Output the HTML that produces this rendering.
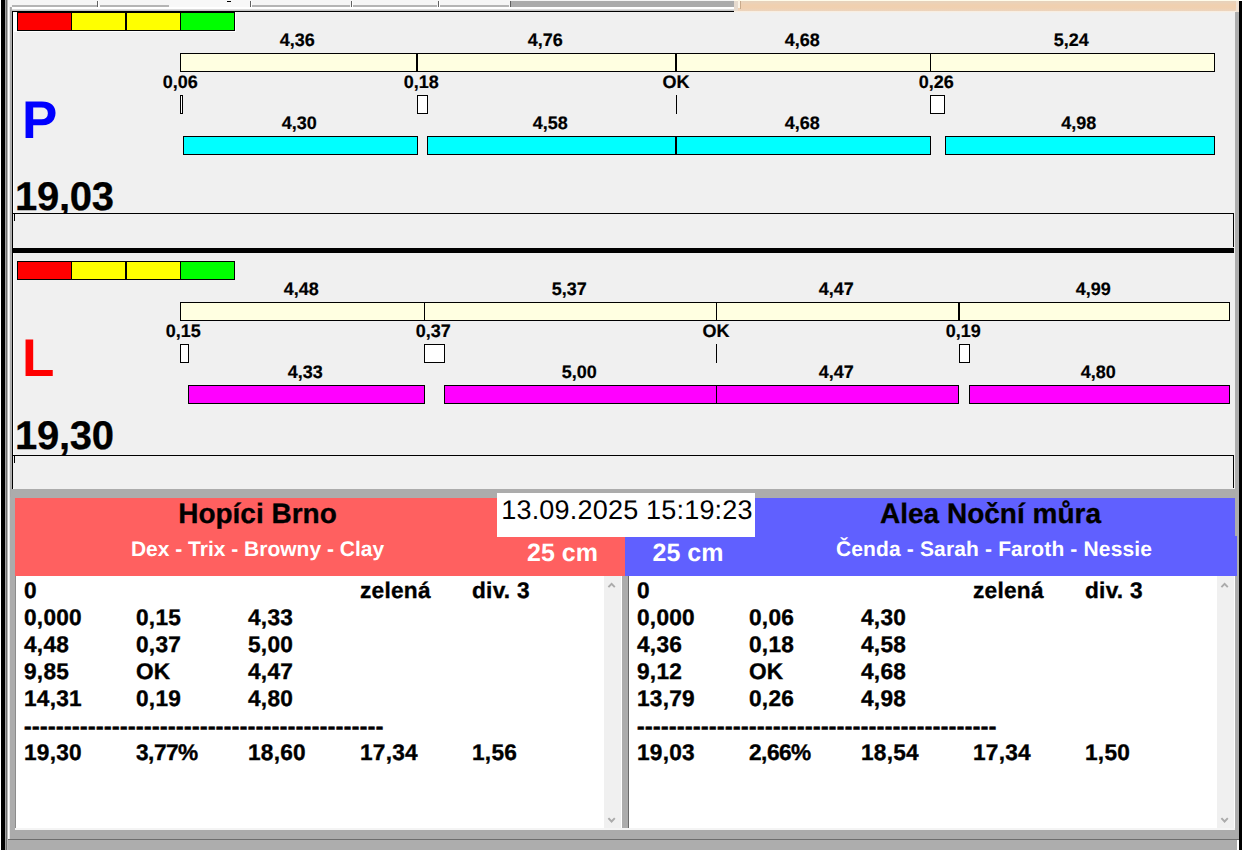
<!DOCTYPE html>
<html lang="cs"><head><meta charset="utf-8"><title>Flyball</title>
<style>
html,body{margin:0;padding:0;}
body{width:1242px;height:850px;position:relative;overflow:hidden;background:#f0f0f0;font-family:"Liberation Sans",sans-serif;font-weight:bold;color:#000;text-rendering:geometricPrecision;}
div{position:absolute;box-sizing:border-box;}
.t{white-space:pre;}
</style></head><body>
<div style="left:0px;top:0px;width:1242px;height:11px;background:#f5f5f5;"></div>
<div style="left:12px;top:5px;width:85px;height:2px;background:#b4b4b4;"></div>
<div style="left:100px;top:5px;width:69px;height:2px;background:#b4b4b4;"></div>
<div style="left:251px;top:5px;width:99px;height:2px;background:#b4b4b4;"></div>
<div style="left:352px;top:5px;width:85px;height:2px;background:#b4b4b4;"></div>
<div style="left:439px;top:5px;width:70px;height:2px;background:#b4b4b4;"></div>
<div style="left:97px;top:1px;width:1px;height:6px;background:#606060;"></div>
<div style="left:98px;top:1px;width:1px;height:6px;background:#fff;"></div>
<div style="left:250px;top:1px;width:1px;height:6px;background:#606060;"></div>
<div style="left:251px;top:1px;width:1px;height:6px;background:#fff;"></div>
<div style="left:351px;top:1px;width:1px;height:6px;background:#606060;"></div>
<div style="left:352px;top:1px;width:1px;height:6px;background:#fff;"></div>
<div style="left:438px;top:1px;width:1px;height:6px;background:#606060;"></div>
<div style="left:439px;top:1px;width:1px;height:6px;background:#fff;"></div>
<div style="left:510px;top:1px;width:1px;height:6px;background:#606060;"></div>
<div style="left:511px;top:1px;width:1px;height:6px;background:#fff;"></div>
<div style="left:170px;top:0px;width:80px;height:9px;background:#f8f8f8;"></div>
<div style="left:227px;top:1px;width:4px;height:1px;background:#000;"></div>
<div style="left:511px;top:1px;width:223px;height:6px;background:#ababab;"></div>
<div style="left:8px;top:7px;width:727px;height:2px;background:#ffffff;"></div>
<div style="left:10px;top:9px;width:725px;height:1px;background:#dadada;"></div>
<div style="left:10px;top:10px;width:725px;height:1px;background:#c2c2c2;"></div>
<div style="left:734px;top:0px;width:505px;height:13px;background:linear-gradient(to bottom,#fffbea 0,#fffbea 1px,#e6d2bc 1px,#ecd2b8 3px,#f0d0b0 5px,#f0d0b0 8px,#ecd4be 11px,#f8eee2 11px,#f8eee2 12px,#f3f0ec 12px,#f3f0ec 13px);"></div>
<div style="left:734px;top:1px;width:4px;height:10px;background:#e6dace;"></div>
<div style="left:738px;top:0px;width:2px;height:8px;background:#fbf3e6;"></div>
<div style="left:740px;top:1px;width:1px;height:8px;background:#c8aa8c;"></div>
<div style="left:1236px;top:1px;width:3px;height:11px;background:#f0e2d4;"></div>
<div style="left:0px;top:0px;width:1px;height:850px;background:#fff;"></div>
<div style="left:1px;top:0px;width:1px;height:850px;background:#000;"></div>
<div style="left:2px;top:0px;width:1px;height:850px;background:#000;"></div>
<div style="left:3px;top:0px;width:1px;height:850px;background:#000;"></div>
<div style="left:4px;top:0px;width:1px;height:850px;background:#000;"></div>
<div style="left:5px;top:0px;width:1px;height:850px;background:#a0a0a0;"></div>
<div style="left:6px;top:0px;width:1px;height:850px;background:#707070;"></div>
<div style="left:7px;top:0px;width:1px;height:850px;background:#b8b8b8;"></div>
<div style="left:8px;top:7px;width:1px;height:843px;background:#fff;"></div>
<div style="left:9px;top:7px;width:1px;height:843px;background:#e8e8e8;"></div>
<div style="left:10px;top:7px;width:1px;height:843px;background:#a8a8a8;"></div>
<div style="left:11px;top:7px;width:1px;height:843px;background:#b0b0b0;"></div>
<div style="left:1235px;top:12px;width:4px;height:838px;background:#adadad;"></div>
<div style="left:1239px;top:1px;width:3px;height:849px;background:#000;"></div>
<div style="left:1239px;top:0px;width:3px;height:1px;background:#fff;"></div>
<div style="left:12px;top:11px;width:1px;height:478px;background:#000;"></div>
<div style="left:13px;top:11px;width:1px;height:478px;background:#fff;"></div>
<div style="left:12px;top:11px;width:722px;height:1px;background:#000;"></div>
<div style="left:13px;top:248px;width:1221px;height:5px;background:#000;"></div>
<div style="left:13px;top:12px;width:223px;height:20px;background:#fff;"></div>
<div style="left:17px;top:12px;width:55px;height:19px;background:#ff0000;border:1px solid #000;"></div>
<div style="left:71px;top:12px;width:55px;height:19px;background:#ffff00;border:1px solid #000;"></div>
<div style="left:126px;top:12px;width:55px;height:19px;background:#ffff00;border:1px solid #000;"></div>
<div style="left:180px;top:12px;width:55px;height:19px;background:#00ff00;border:1px solid #000;"></div>
<div style="left:180px;top:53px;width:237px;height:19px;background:#ffffe1;border:1px solid #000;"></div>
<div class="t" style="top:31px;font-size:18px;line-height:18px;-webkit-text-stroke:0.2px #000;left:-2.6999999999999886px;width:600px;text-align:center;">4,36</div>
<div style="left:417px;top:53px;width:259px;height:19px;background:#ffffe1;border:1px solid #000;"></div>
<div class="t" style="top:31px;font-size:18px;line-height:18px;-webkit-text-stroke:0.2px #000;left:245.29999999999995px;width:600px;text-align:center;">4,76</div>
<div style="left:676px;top:53px;width:255px;height:19px;background:#ffffe1;border:1px solid #000;"></div>
<div class="t" style="top:31px;font-size:18px;line-height:18px;-webkit-text-stroke:0.2px #000;left:502.29999999999995px;width:600px;text-align:center;">4,68</div>
<div style="left:930px;top:53px;width:285px;height:19px;background:#ffffe1;border:1px solid #000;"></div>
<div class="t" style="top:31px;font-size:18px;line-height:18px;-webkit-text-stroke:0.2px #000;left:771.3px;width:600px;text-align:center;">5,24</div>
<div style="left:180px;top:95px;width:3px;height:19px;background:#fff;border:1px solid #000;"></div>
<div class="t" style="top:73px;font-size:18px;line-height:18px;-webkit-text-stroke:0.2px #000;left:-119.69999999999999px;width:600px;text-align:center;">0,06</div>
<div style="left:183px;top:136px;width:235px;height:19px;background:#00ffff;border:1px solid #000;"></div>
<div class="t" style="top:114px;font-size:18px;line-height:18px;-webkit-text-stroke:0.2px #000;left:-0.6999999999999886px;width:600px;text-align:center;">4,30</div>
<div style="left:417px;top:95px;width:11px;height:19px;background:#fff;border:1px solid #000;"></div>
<div class="t" style="top:73px;font-size:18px;line-height:18px;-webkit-text-stroke:0.2px #000;left:121.30000000000001px;width:600px;text-align:center;">0,18</div>
<div style="left:427px;top:136px;width:249px;height:19px;background:#00ffff;border:1px solid #000;"></div>
<div class="t" style="top:114px;font-size:18px;line-height:18px;-webkit-text-stroke:0.2px #000;left:250.29999999999995px;width:600px;text-align:center;">4,58</div>
<div style="left:676px;top:95px;width:1px;height:19px;background:#000;"></div>
<div class="t" style="top:73px;font-size:18px;line-height:18px;-webkit-text-stroke:0.2px #000;left:376px;width:600px;text-align:center;">OK</div>
<div style="left:676px;top:136px;width:255px;height:19px;background:#00ffff;border:1px solid #000;"></div>
<div class="t" style="top:114px;font-size:18px;line-height:18px;-webkit-text-stroke:0.2px #000;left:502.29999999999995px;width:600px;text-align:center;">4,68</div>
<div style="left:930px;top:95px;width:15px;height:19px;background:#fff;border:1px solid #000;"></div>
<div class="t" style="top:73px;font-size:18px;line-height:18px;-webkit-text-stroke:0.2px #000;left:636.3px;width:600px;text-align:center;">0,26</div>
<div style="left:945px;top:136px;width:270px;height:19px;background:#00ffff;border:1px solid #000;"></div>
<div class="t" style="top:114px;font-size:18px;line-height:18px;-webkit-text-stroke:0.2px #000;left:778.8px;width:600px;text-align:center;">4,98</div>
<div class="t" style="top:94px;font-size:53px;line-height:53px;color:#0000ff;left:22px;">P</div>
<div class="t" style="top:177px;font-size:40px;line-height:40px;letter-spacing:-0.3px;-webkit-text-stroke:0.3px #000;left:15px;">19,03</div>
<div style="left:12px;top:213px;width:1222px;height:34px;background:#f0f0f0;border-top:1px solid #000;border-left:1px solid #000;border-right:1px solid #000;"></div>
<div style="left:14px;top:214px;width:1px;height:7px;background:#000;"></div>
<div style="left:17px;top:261px;width:55px;height:19px;background:#ff0000;border:1px solid #000;"></div>
<div style="left:71px;top:261px;width:55px;height:19px;background:#ffff00;border:1px solid #000;"></div>
<div style="left:126px;top:261px;width:55px;height:19px;background:#ffff00;border:1px solid #000;"></div>
<div style="left:180px;top:261px;width:55px;height:19px;background:#00ff00;border:1px solid #000;"></div>
<div style="left:180px;top:302px;width:245px;height:19px;background:#ffffe1;border:1px solid #000;"></div>
<div class="t" style="top:280px;font-size:18px;line-height:18px;-webkit-text-stroke:0.2px #000;left:1.3000000000000114px;width:600px;text-align:center;">4,48</div>
<div style="left:424px;top:302px;width:293px;height:19px;background:#ffffe1;border:1px solid #000;"></div>
<div class="t" style="top:280px;font-size:18px;line-height:18px;-webkit-text-stroke:0.2px #000;left:269.29999999999995px;width:600px;text-align:center;">5,37</div>
<div style="left:716px;top:302px;width:243px;height:19px;background:#ffffe1;border:1px solid #000;"></div>
<div class="t" style="top:280px;font-size:18px;line-height:18px;-webkit-text-stroke:0.2px #000;left:536.3px;width:600px;text-align:center;">4,47</div>
<div style="left:959px;top:302px;width:271px;height:19px;background:#ffffe1;border:1px solid #000;"></div>
<div class="t" style="top:280px;font-size:18px;line-height:18px;-webkit-text-stroke:0.2px #000;left:793.3px;width:600px;text-align:center;">4,99</div>
<div style="left:180px;top:344px;width:9px;height:19px;background:#fff;border:1px solid #000;"></div>
<div class="t" style="top:322px;font-size:18px;line-height:18px;-webkit-text-stroke:0.2px #000;left:-116.69999999999999px;width:600px;text-align:center;">0,15</div>
<div style="left:188px;top:385px;width:237px;height:19px;background:#ff00ff;border:1px solid #000;"></div>
<div class="t" style="top:363px;font-size:18px;line-height:18px;-webkit-text-stroke:0.2px #000;left:5.300000000000011px;width:600px;text-align:center;">4,33</div>
<div style="left:424px;top:344px;width:21px;height:19px;background:#fff;border:1px solid #000;"></div>
<div class="t" style="top:322px;font-size:18px;line-height:18px;-webkit-text-stroke:0.2px #000;left:133.3px;width:600px;text-align:center;">0,37</div>
<div style="left:444px;top:385px;width:273px;height:19px;background:#ff00ff;border:1px solid #000;"></div>
<div class="t" style="top:363px;font-size:18px;line-height:18px;-webkit-text-stroke:0.2px #000;left:279.29999999999995px;width:600px;text-align:center;">5,00</div>
<div style="left:716px;top:344px;width:1px;height:19px;background:#000;"></div>
<div class="t" style="top:322px;font-size:18px;line-height:18px;-webkit-text-stroke:0.2px #000;left:416px;width:600px;text-align:center;">OK</div>
<div style="left:716px;top:385px;width:243px;height:19px;background:#ff00ff;border:1px solid #000;"></div>
<div class="t" style="top:363px;font-size:18px;line-height:18px;-webkit-text-stroke:0.2px #000;left:536.3px;width:600px;text-align:center;">4,47</div>
<div style="left:959px;top:344px;width:11px;height:19px;background:#fff;border:1px solid #000;"></div>
<div class="t" style="top:322px;font-size:18px;line-height:18px;-webkit-text-stroke:0.2px #000;left:663.3px;width:600px;text-align:center;">0,19</div>
<div style="left:969px;top:385px;width:261px;height:19px;background:#ff00ff;border:1px solid #000;"></div>
<div class="t" style="top:363px;font-size:18px;line-height:18px;-webkit-text-stroke:0.2px #000;left:798.3px;width:600px;text-align:center;">4,80</div>
<div class="t" style="top:332px;font-size:53px;line-height:53px;color:#ff0000;left:22px;">L</div>
<div class="t" style="top:416px;font-size:40px;line-height:40px;letter-spacing:-0.3px;-webkit-text-stroke:0.3px #000;left:15px;">19,30</div>
<div style="left:12px;top:455px;width:1222px;height:33px;background:#f0f0f0;border-top:1px solid #000;border-left:1px solid #000;border-right:1px solid #000;"></div>
<div style="left:14px;top:456px;width:1px;height:7px;background:#000;"></div>
<div style="left:11px;top:489px;width:1224px;height:9px;background:#acacac;"></div>
<div style="left:10px;top:497px;width:6px;height:343px;background:#acacac;"></div>
<div style="left:15px;top:498px;width:610px;height:78px;background:#ff6060;"></div>
<div style="left:625px;top:498px;width:610px;height:78px;background:#6060ff;"></div>
<div style="left:1235px;top:536px;width:2px;height:40px;background:#6060ff;"></div>
<div style="left:497px;top:493px;width:258px;height:44px;background:#fff;"></div>
<div class="t" style="top:497px;font-size:27px;line-height:27px;font-weight:normal;letter-spacing:0.2px;left:327px;width:600px;text-align:center;">13.09.2025 15:19:23</div>
<div class="t" style="top:500px;font-size:28px;line-height:28px;-webkit-text-stroke:0.3px #000;left:-42.5px;width:600px;text-align:center;">Hopíci Brno</div>
<div class="t" style="top:539px;font-size:21px;line-height:21px;color:#fff;left:-42.5px;width:600px;text-align:center;">Dex - Trix - Browny - Clay</div>
<div class="t" style="top:541px;font-size:25px;line-height:25px;color:#fff;left:262.5px;width:600px;text-align:center;">25 cm</div>
<div class="t" style="top:541px;font-size:25px;line-height:25px;color:#fff;left:388px;width:600px;text-align:center;">25 cm</div>
<div class="t" style="top:500px;font-size:28px;line-height:28px;-webkit-text-stroke:0.3px #000;left:690.5px;width:600px;text-align:center;">Alea Noční můra</div>
<div class="t" style="top:539px;font-size:21px;line-height:21px;color:#fff;letter-spacing:0.15px;left:694px;width:600px;text-align:center;">Čenda - Sarah - Faroth - Nessie</div>
<div style="left:15px;top:576px;width:606px;height:252px;background:#fff;"></div>
<div style="left:604px;top:576px;width:17px;height:252px;background:#f0f0f0;"></div>
<svg style="position:absolute;left:604px;top:576px" width="17" height="252" viewBox="0 0 17 252"><path d="M4.4 11.2 L7.6 7.8 L10.8 11.2" fill="none" stroke="#ababab" stroke-width="1.9"/><path d="M4.4 242.1 L7.6 245.5 L10.8 242.1" fill="none" stroke="#ababab" stroke-width="1.9"/></svg>
<div class="t" style="top:579px;font-size:22.67px;line-height:22.67px;letter-spacing:0.25px;-webkit-text-stroke:0.35px #000;transform:translateY(-0.5px);left:24px;">0</div>
<div class="t" style="top:579px;font-size:22.67px;line-height:22.67px;letter-spacing:0.25px;-webkit-text-stroke:0.35px #000;transform:translateY(-0.5px);left:360px;">zelená</div>
<div class="t" style="top:579px;font-size:22.67px;line-height:22.67px;letter-spacing:0.25px;-webkit-text-stroke:0.35px #000;transform:translateY(-0.5px);left:472px;">div. 3</div>
<div class="t" style="top:606px;font-size:22.67px;line-height:22.67px;letter-spacing:0.25px;-webkit-text-stroke:0.35px #000;transform:translateY(-0.5px);left:24px;">0,000</div>
<div class="t" style="top:606px;font-size:22.67px;line-height:22.67px;letter-spacing:0.25px;-webkit-text-stroke:0.35px #000;transform:translateY(-0.5px);left:136px;">0,15</div>
<div class="t" style="top:606px;font-size:22.67px;line-height:22.67px;letter-spacing:0.25px;-webkit-text-stroke:0.35px #000;transform:translateY(-0.5px);left:248px;">4,33</div>
<div class="t" style="top:633px;font-size:22.67px;line-height:22.67px;letter-spacing:0.25px;-webkit-text-stroke:0.35px #000;transform:translateY(-0.5px);left:24px;">4,48</div>
<div class="t" style="top:633px;font-size:22.67px;line-height:22.67px;letter-spacing:0.25px;-webkit-text-stroke:0.35px #000;transform:translateY(-0.5px);left:136px;">0,37</div>
<div class="t" style="top:633px;font-size:22.67px;line-height:22.67px;letter-spacing:0.25px;-webkit-text-stroke:0.35px #000;transform:translateY(-0.5px);left:248px;">5,00</div>
<div class="t" style="top:660px;font-size:22.67px;line-height:22.67px;letter-spacing:0.25px;-webkit-text-stroke:0.35px #000;transform:translateY(-0.5px);left:24px;">9,85</div>
<div class="t" style="top:660px;font-size:22.67px;line-height:22.67px;letter-spacing:0.25px;-webkit-text-stroke:0.35px #000;transform:translateY(-0.5px);left:136px;">OK</div>
<div class="t" style="top:660px;font-size:22.67px;line-height:22.67px;letter-spacing:0.25px;-webkit-text-stroke:0.35px #000;transform:translateY(-0.5px);left:248px;">4,47</div>
<div class="t" style="top:687px;font-size:22.67px;line-height:22.67px;letter-spacing:0.25px;-webkit-text-stroke:0.35px #000;transform:translateY(-0.5px);left:24px;">14,31</div>
<div class="t" style="top:687px;font-size:22.67px;line-height:22.67px;letter-spacing:0.25px;-webkit-text-stroke:0.35px #000;transform:translateY(-0.5px);left:136px;">0,19</div>
<div class="t" style="top:687px;font-size:22.67px;line-height:22.67px;letter-spacing:0.25px;-webkit-text-stroke:0.35px #000;transform:translateY(-0.5px);left:248px;">4,80</div>
<div class="t" style="top:715px;font-size:22.67px;line-height:22.67px;letter-spacing:0.45px;-webkit-text-stroke:0.6px #000;left:24px;">---------------------------------------------</div>
<div class="t" style="top:741px;font-size:22.67px;line-height:22.67px;letter-spacing:0.25px;-webkit-text-stroke:0.35px #000;transform:translateY(-0.5px);left:24px;">19,30</div>
<div class="t" style="top:741px;font-size:22.67px;line-height:22.67px;letter-spacing:-0.5px;-webkit-text-stroke:0.35px #000;transform:translateY(-0.5px);left:136px;">3,77%</div>
<div class="t" style="top:741px;font-size:22.67px;line-height:22.67px;letter-spacing:0.25px;-webkit-text-stroke:0.35px #000;transform:translateY(-0.5px);left:248px;">18,60</div>
<div class="t" style="top:741px;font-size:22.67px;line-height:22.67px;letter-spacing:0.25px;-webkit-text-stroke:0.35px #000;transform:translateY(-0.5px);left:360px;">17,34</div>
<div class="t" style="top:741px;font-size:22.67px;line-height:22.67px;letter-spacing:0.25px;-webkit-text-stroke:0.35px #000;transform:translateY(-0.5px);left:472px;">1,56</div>
<div style="left:629px;top:576px;width:605px;height:252px;background:#fff;"></div>
<div style="left:1217px;top:576px;width:17px;height:252px;background:#f0f0f0;"></div>
<svg style="position:absolute;left:1217px;top:576px" width="17" height="252" viewBox="0 0 17 252"><path d="M4.4 11.2 L7.6 7.8 L10.8 11.2" fill="none" stroke="#ababab" stroke-width="1.9"/><path d="M4.4 242.1 L7.6 245.5 L10.8 242.1" fill="none" stroke="#ababab" stroke-width="1.9"/></svg>
<div class="t" style="top:579px;font-size:22.67px;line-height:22.67px;letter-spacing:0.25px;-webkit-text-stroke:0.35px #000;transform:translateY(-0.5px);left:637px;">0</div>
<div class="t" style="top:579px;font-size:22.67px;line-height:22.67px;letter-spacing:0.25px;-webkit-text-stroke:0.35px #000;transform:translateY(-0.5px);left:973px;">zelená</div>
<div class="t" style="top:579px;font-size:22.67px;line-height:22.67px;letter-spacing:0.25px;-webkit-text-stroke:0.35px #000;transform:translateY(-0.5px);left:1085px;">div. 3</div>
<div class="t" style="top:606px;font-size:22.67px;line-height:22.67px;letter-spacing:0.25px;-webkit-text-stroke:0.35px #000;transform:translateY(-0.5px);left:637px;">0,000</div>
<div class="t" style="top:606px;font-size:22.67px;line-height:22.67px;letter-spacing:0.25px;-webkit-text-stroke:0.35px #000;transform:translateY(-0.5px);left:749px;">0,06</div>
<div class="t" style="top:606px;font-size:22.67px;line-height:22.67px;letter-spacing:0.25px;-webkit-text-stroke:0.35px #000;transform:translateY(-0.5px);left:861px;">4,30</div>
<div class="t" style="top:633px;font-size:22.67px;line-height:22.67px;letter-spacing:0.25px;-webkit-text-stroke:0.35px #000;transform:translateY(-0.5px);left:637px;">4,36</div>
<div class="t" style="top:633px;font-size:22.67px;line-height:22.67px;letter-spacing:0.25px;-webkit-text-stroke:0.35px #000;transform:translateY(-0.5px);left:749px;">0,18</div>
<div class="t" style="top:633px;font-size:22.67px;line-height:22.67px;letter-spacing:0.25px;-webkit-text-stroke:0.35px #000;transform:translateY(-0.5px);left:861px;">4,58</div>
<div class="t" style="top:660px;font-size:22.67px;line-height:22.67px;letter-spacing:0.25px;-webkit-text-stroke:0.35px #000;transform:translateY(-0.5px);left:637px;">9,12</div>
<div class="t" style="top:660px;font-size:22.67px;line-height:22.67px;letter-spacing:0.25px;-webkit-text-stroke:0.35px #000;transform:translateY(-0.5px);left:749px;">OK</div>
<div class="t" style="top:660px;font-size:22.67px;line-height:22.67px;letter-spacing:0.25px;-webkit-text-stroke:0.35px #000;transform:translateY(-0.5px);left:861px;">4,68</div>
<div class="t" style="top:687px;font-size:22.67px;line-height:22.67px;letter-spacing:0.25px;-webkit-text-stroke:0.35px #000;transform:translateY(-0.5px);left:637px;">13,79</div>
<div class="t" style="top:687px;font-size:22.67px;line-height:22.67px;letter-spacing:0.25px;-webkit-text-stroke:0.35px #000;transform:translateY(-0.5px);left:749px;">0,26</div>
<div class="t" style="top:687px;font-size:22.67px;line-height:22.67px;letter-spacing:0.25px;-webkit-text-stroke:0.35px #000;transform:translateY(-0.5px);left:861px;">4,98</div>
<div class="t" style="top:715px;font-size:22.67px;line-height:22.67px;letter-spacing:0.45px;-webkit-text-stroke:0.6px #000;left:637px;">---------------------------------------------</div>
<div class="t" style="top:741px;font-size:22.67px;line-height:22.67px;letter-spacing:0.25px;-webkit-text-stroke:0.35px #000;transform:translateY(-0.5px);left:637px;">19,03</div>
<div class="t" style="top:741px;font-size:22.67px;line-height:22.67px;letter-spacing:-0.5px;-webkit-text-stroke:0.35px #000;transform:translateY(-0.5px);left:749px;">2,66%</div>
<div class="t" style="top:741px;font-size:22.67px;line-height:22.67px;letter-spacing:0.25px;-webkit-text-stroke:0.35px #000;transform:translateY(-0.5px);left:861px;">18,54</div>
<div class="t" style="top:741px;font-size:22.67px;line-height:22.67px;letter-spacing:0.25px;-webkit-text-stroke:0.35px #000;transform:translateY(-0.5px);left:973px;">17,34</div>
<div class="t" style="top:741px;font-size:22.67px;line-height:22.67px;letter-spacing:0.25px;-webkit-text-stroke:0.35px #000;transform:translateY(-0.5px);left:1085px;">1,50</div>
<div style="left:621px;top:576px;width:1px;height:252px;background:#fff;"></div>
<div style="left:622px;top:576px;width:6px;height:252px;background:#acacac;"></div>
<div style="left:15px;top:576px;width:1px;height:252px;background:#8c8c8c;"></div>
<div style="left:628px;top:576px;width:1px;height:252px;background:#6a6a6a;"></div>
<div style="left:1234px;top:576px;width:1px;height:252px;background:#fff;"></div>
<div style="left:15px;top:828px;width:1220px;height:2px;background:#f4f4f4;"></div>
<div style="left:10px;top:830px;width:1229px;height:9px;background:#ababab;"></div>
<div style="left:8px;top:839px;width:1231px;height:1px;background:#6e6e6e;"></div>
<div style="left:8px;top:840px;width:1231px;height:10px;background:#adadad;"></div>
<div style="left:1237px;top:840px;width:2px;height:10px;background:#fff;"></div>
</body></html>
